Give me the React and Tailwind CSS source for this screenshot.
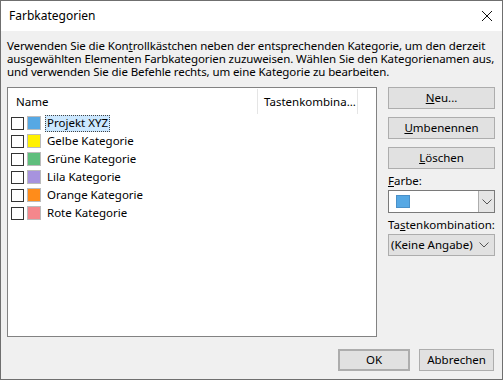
import React from "react";

const cats = [
  { name: "Projekt XYZ", color: "#56a8e4", selected: true },
  { name: "Gelbe Kategorie", color: "#fff100" },
  { name: "Grüne Kategorie", color: "#5fbe7d" },
  { name: "Lila Kategorie", color: "#a793de" },
  { name: "Orange Kategorie", color: "#ff8c1a" },
  { name: "Rote Kategorie", color: "#f4878c" },
];

function Chevron() {
  return (
    <svg width="10" height="6" viewBox="0 0 10 6">
      <path d="M0.5 0.5 L5 5 L9.5 0.5" fill="none" stroke="#555" strokeWidth="1" />
    </svg>
  );
}

function Btn({ children, className = "" }) {
  return (
    <div className={"flex items-center justify-center bg-[#e1e1e1] border border-[#adadad] text-[11.5px] text-black " + className}>
      {children}
    </div>
  );
}

export default function App() {
  return (
    <div
      className="w-[503px] h-[380px] border border-[#6f6f6f] flex flex-col bg-[#f0f0f0] text-black overflow-hidden"
      style={{ fontFamily: '"Noto Sans", "Open Sans", sans-serif' }}
    >
      <div className="h-[30px] bg-white flex items-center justify-between pl-[8px] pr-[9px] shrink-0">
        <span className="text-[12px]">Farbkategorien</span>
        <svg width="12" height="12" viewBox="0 0 12 12">
          <path d="M1 1 L11 11 M11 1 L1 11" stroke="#111" strokeWidth="1" />
        </svg>
      </div>
      <div className="flex-1 flex flex-col pl-[6px] pr-[7px]">
        <p className="text-[11.5px] leading-[13px] mt-[8px] h-[48px] tracking-[-0.1px]">
          Verwenden Sie die Kon<span className="underline">t</span>rollkästchen neben der entsprechenden Kategorie, um den derzeit
          ausgewählten Elementen Farbkategorien zuzuweisen. Wählen Sie den Kategorienamen aus,
          und verwenden Sie die Befehle rechts, um eine Kategorie zu bearbeiten.
        </p>
        <div className="flex gap-[11px]">
          <div className="w-[370px] h-[250px] bg-white border border-[#828282] text-[11.5px]">
            <div className="flex h-[25px] mt-[1px] items-center">
              <div className="w-[250px] pl-[8px] h-full flex items-center border-r border-[#e5e5e5]">Name</div>
              <div className="w-[100px] pl-[6px] h-full flex items-center border-r border-[#e5e5e5] whitespace-nowrap overflow-hidden">Tastenkombina...</div>
            </div>
            <div className="flex flex-col">
              {cats.map((c) => (
                <div key={c.name} className="h-[18px] flex items-center pl-[3px]">
                  <div className="w-[13px] h-[13px] border border-[#333] bg-white" />
                  <div className="w-[14px] h-[14px] ml-[3px] border border-[#bbb]" style={{ background: c.color }} />
                  {c.selected ? (
                    <span className="ml-[4px] px-[2px] h-[17px] flex items-center bg-[#cce8ff] outline outline-1 outline-dotted outline-[#444] -outline-offset-1">
                      {c.name}
                    </span>
                  ) : (
                    <span className="ml-[6px]">{c.name}</span>
                  )}
                </div>
              ))}
            </div>
          </div>
          <div className="w-[107px] flex flex-col">
            <Btn className="h-[22px]"><span><span className="underline">N</span>eu...</span></Btn>
            <Btn className="h-[22px] mt-[8px]"><span><span className="underline">U</span>mbenennen</span></Btn>
            <Btn className="h-[22px] mt-[8px]"><span><span className="underline">L</span>öschen</span></Btn>
            <div className="text-[11.5px] mt-[3px] h-[18px] leading-[18px]"><span className="underline">F</span>arbe:</div>
            <div className="h-[23px] bg-white border border-[#7a7a7a] flex">
              <div className="flex-1 flex items-center pl-[7px]">
                <div className="w-[14px] h-[13px] bg-[#56a8e4] border border-[#4a90c8]" />
              </div>
              <div className="w-[16px] bg-[#e5e5e5] border-l border-[#adadad] flex items-center justify-center">
                <Chevron />
              </div>
            </div>
            <div className="text-[11.5px] mt-[2px] h-[19px] leading-[19px] whitespace-nowrap">Ta<span className="underline">s</span>tenkombination:</div>
            <div className="h-[22px] bg-[#e1e1e1] border border-[#adadad] flex items-center justify-between pl-[2px] pr-[5px] text-[11.5px]">
              <span className="whitespace-nowrap">(Keine Angabe)</span>
              <Chevron />
            </div>
          </div>
        </div>
        <div className="flex justify-end gap-[9px] mt-[12px] pr-[1px]">
          <Btn className="w-[72px] h-[22px] border-2 border-[#0078d7]">OK</Btn>
          <Btn className="w-[75px] h-[22px]">Abbrechen</Btn>
        </div>
      </div>
    </div>
  );
}
